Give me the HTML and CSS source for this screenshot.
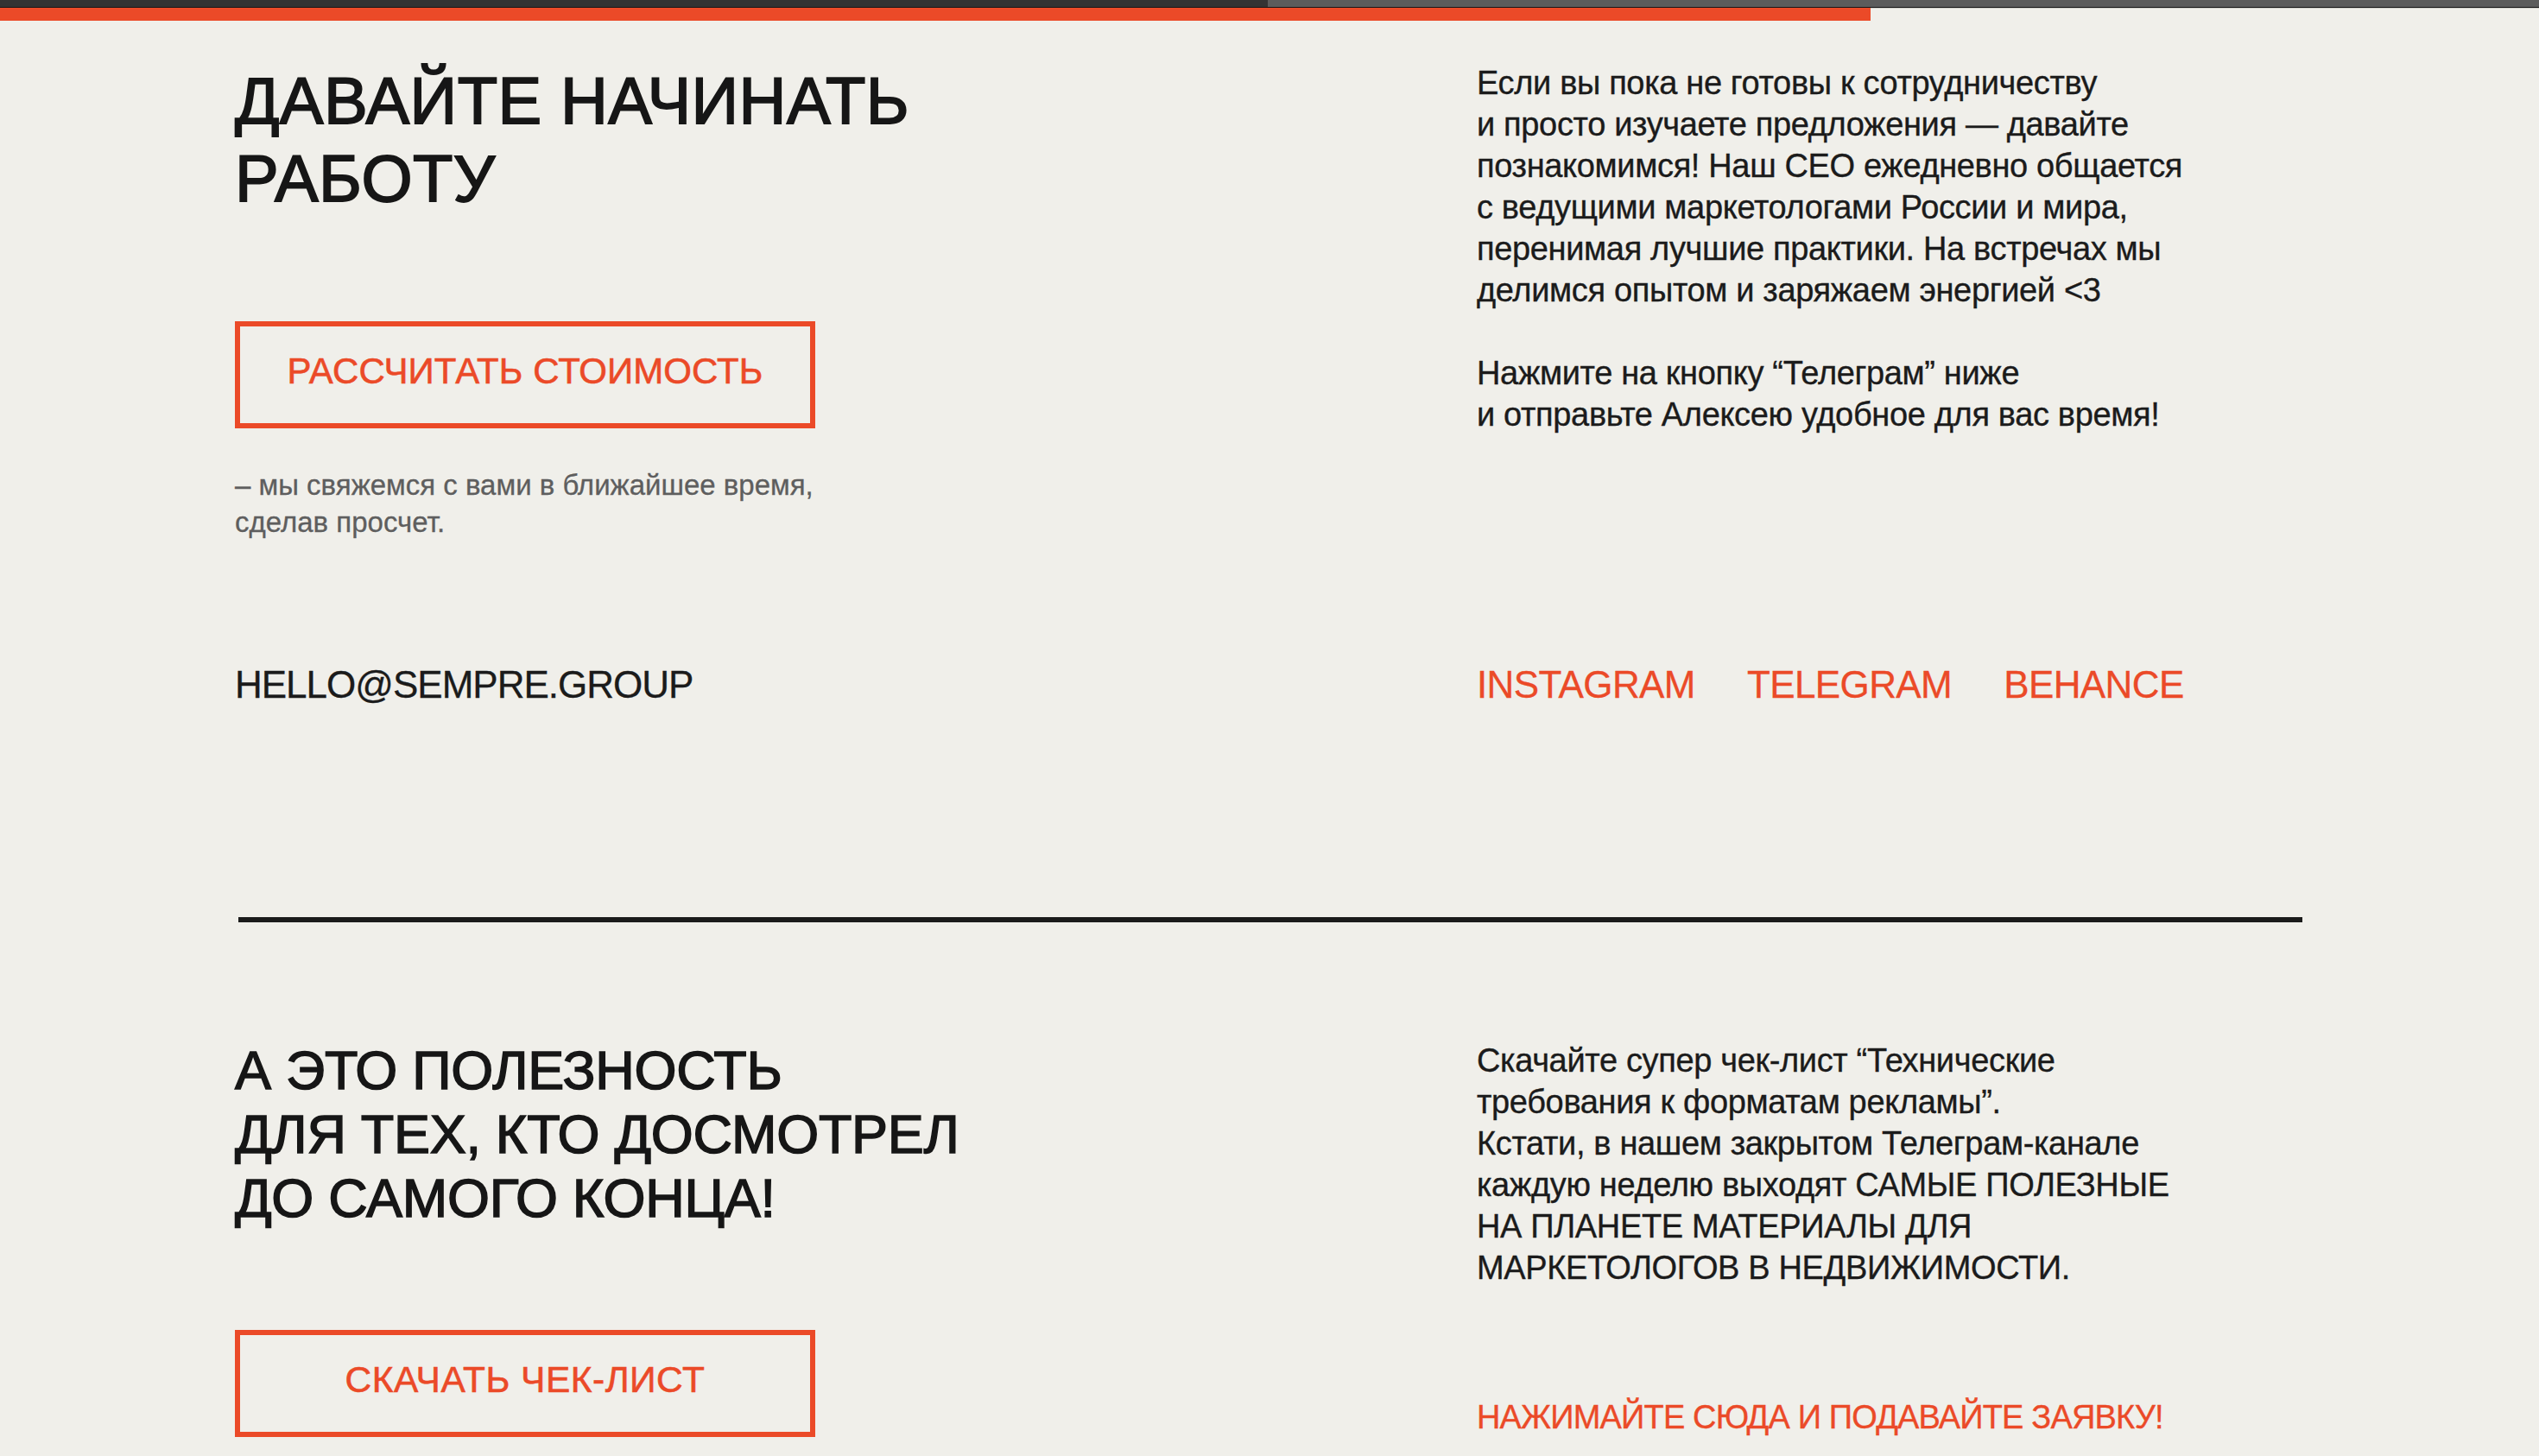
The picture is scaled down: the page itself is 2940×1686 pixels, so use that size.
FILE: index.html
```html
<!DOCTYPE html>
<html lang="ru">
<head>
<meta charset="utf-8">
<title>Sempre — контакты</title>
<link rel="stylesheet" href="styles.css">
</head>
<body>
<div class="chrome"><div class="chrome-dark"></div><div class="chrome-gray"></div></div>
<div class="progress"><div class="progress-fill"></div></div>
<main class="page">
  <section class="grid contact">
    <div class="col">
      <h2 class="title">ДАВАЙТЕ НАЧИНАТЬ<br>РАБОТУ</h2>
      <a class="btn btn-first" href="#">РАССЧИТАТЬ СТОИМОСТЬ</a>
      <p class="note">– мы свяжемся с вами в ближайшее время,<br>сделав просчет.</p>
    </div>
    <div class="col">
      <p class="text">Если вы пока не готовы к сотрудничеству<br>и просто изучаете предложения — давайте<br>познакомимся! Наш CEO ежедневно общается<br>с ведущими маркетологами России и мира,<br>перенимая лучшие практики. На встречах мы<br>делимся опытом и заряжаем энергией &lt;3</p>
      <p class="text text-gap">Нажмите на кнопку “Телеграм” ниже<br>и отправьте Алексею удобное для вас время!</p>
    </div>
    <a class="email" href="#">HELLO@SEMPRE.GROUP</a>
    <nav class="socials">
      <a class="social" href="#">INSTAGRAM</a>
      <a class="social" href="#">TELEGRAM</a>
      <a class="social" href="#">BEHANCE</a>
    </nav>
  </section>
  <div class="divider"></div>
  <section class="grid bonus">
    <div class="col">
      <h2 class="title title-small">А ЭТО ПОЛЕЗНОСТЬ<br>ДЛЯ ТЕХ, КТО ДОСМОТРЕЛ<br>ДО САМОГО КОНЦА!</h2>
      <a class="btn btn-second" href="#">СКАЧАТЬ ЧЕК-ЛИСТ</a>
    </div>
    <div class="col">
      <p class="text text-shift">Скачайте супер чек-лист “Технические<br>требования к форматам рекламы”.<br>Кстати, в нашем закрытом Телеграм-канале<br>каждую неделю выходят САМЫЕ ПОЛЕЗНЫЕ<br>НА ПЛАНЕТЕ МАТЕРИАЛЫ ДЛЯ<br>МАРКЕТОЛОГОВ В НЕДВИЖИМОСТИ.</p>
      <a class="cta" href="#">НАЖИМАЙТЕ СЮДА И ПОДАВАЙТЕ ЗАЯВКУ!</a>
    </div>
  </section>
</main>
</body>
</html>
```

FILE: styles.css
```css
html, body {
  margin: 0;
  padding: 0;
}

body {
  background: #f0efea;
  color: #1b1b1b;
  font-family: "Liberation Sans", Arial, sans-serif;
  overflow: hidden;
  height: 1686px;
}

a {
  text-decoration: none;
  color: inherit;
}

.chrome {
  display: flex;
  height: 8px;
}

.chrome-dark {
  width: 1468px;
  background: #333333;
}

.chrome-gray {
  flex: 1;
  background: #5c5c5c;
}

.progress {
  height: 15px;
  border-top: 1px solid #161616;
  box-shadow: inset 0 1px 0 #cfcdc8;
}

.progress-fill {
  width: 2166px;
  height: 100%;
  background: #eb4a28;
}

.page {
  width: 2394px;
  padding: 48px 0 0 272px;
}

.grid {
  display: grid;
  grid-template-columns: 1438px 1fr;
}

.contact {
  row-gap: 141px;
}

.col {
  display: flex;
  flex-direction: column;
  align-items: flex-start;
}

.title {
  margin: 0;
  font-size: 76px;
  line-height: 90px;
  font-weight: 400;
  letter-spacing: 0.4px;
  color: #161616;
  -webkit-text-stroke: 1.8px #161616;
}

.title-small {
  font-size: 63px;
  line-height: 74px;
  letter-spacing: -0.3px;
  -webkit-text-stroke: 1.5px #161616;
}

.btn {
  box-sizing: border-box;
  width: 672px;
  height: 124px;
  border: 6px solid #eb4a28;
  color: #eb4a28;
  font-size: 42px;
  letter-spacing: 0.1px;
  -webkit-text-stroke: 0.6px #eb4a28;
  display: flex;
  align-items: center;
  justify-content: center;
  padding-bottom: 8px;
}

.btn-first {
  margin-top: 120px;
}

.btn-second {
  margin-top: 116px;
  font-size: 42.5px;
  letter-spacing: 0.5px;
}

.note {
  margin: 44px 0 0;
  font-size: 33px;
  line-height: 43px;
  color: #5e5e5e;
  letter-spacing: 0;
  -webkit-text-stroke: 0.3px #5e5e5e;
}

.text {
  margin: 0;
  font-size: 38px;
  line-height: 48px;
  letter-spacing: -0.35px;
  color: #1b1b1b;
  -webkit-text-stroke: 0.35px #1b1b1b;
}

.text-gap {
  margin-top: 48px;
}

.text-shift {
  margin-top: 2px;
}

.email {
  font-size: 44px;
  line-height: 52px;
  letter-spacing: -1px;
  color: #1b1b1b;
  -webkit-text-stroke: 0.3px #1b1b1b;
}

.socials {
  display: flex;
  gap: 60px;
}

.social {
  font-size: 44px;
  line-height: 52px;
  letter-spacing: -0.6px;
  color: #eb4a28;
  -webkit-text-stroke: 0.3px #eb4a28;
}

.divider {
  height: 6px;
  margin: 243px 0 0 4px;
  background: #1b1b1b;
}

.bonus {
  margin-top: 134px;
}

.cta {
  margin-top: 125px;
  font-size: 38px;
  line-height: 48px;
  letter-spacing: -0.85px;
  color: #eb4a28;
  -webkit-text-stroke: 0.35px #eb4a28;
}
```
